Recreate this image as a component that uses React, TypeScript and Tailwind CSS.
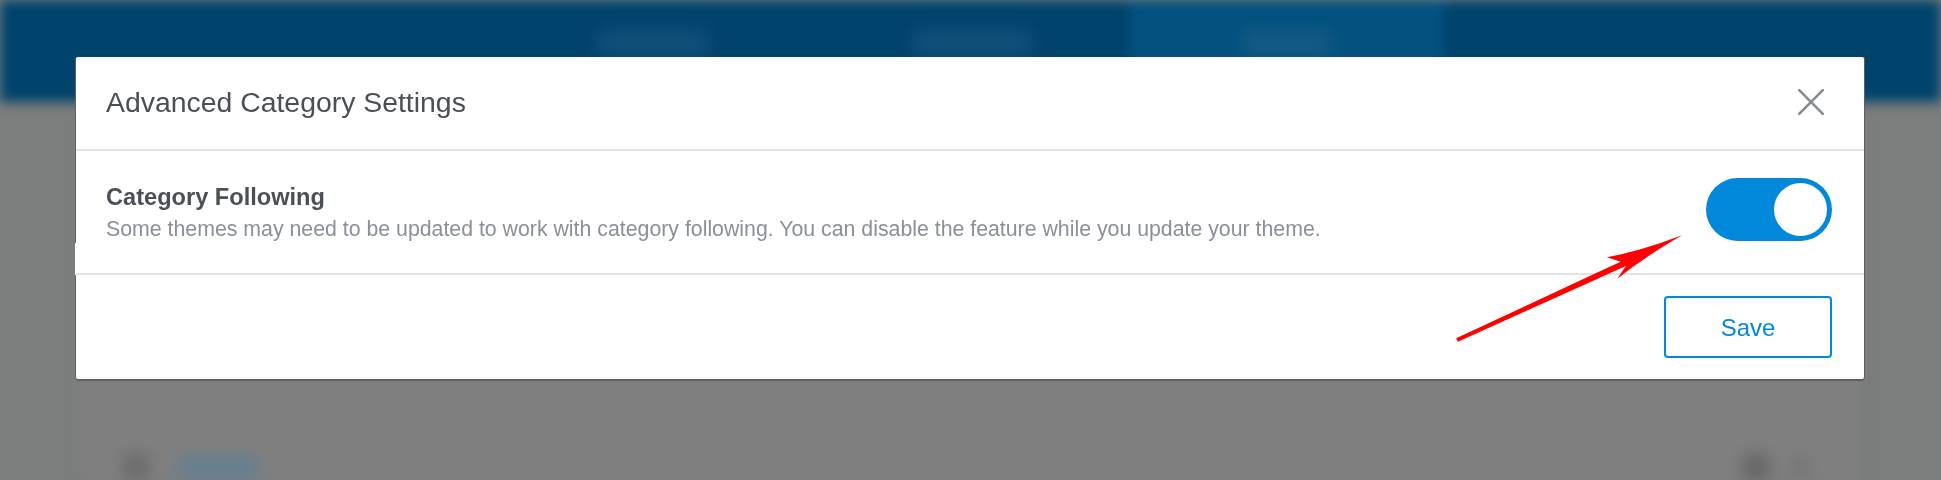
export default function App() {
  return (
    <div className="relative h-[480px] w-[1941px] overflow-hidden bg-[#7c7d7d] font-['Liberation_Sans',Arial,sans-serif]">
      {/* Blurred page behind the dialog */}
      <div className="blur-[6px]">
        <header className="flex h-[102px] bg-[#00436d] pl-[499px]">
          <div className="flex h-full w-[315px] justify-center pr-[8px] pt-[30px]">
            <div className="h-[26px] w-[112px] bg-[#12507a] blur-[7px]" />
          </div>
          <div className="flex h-full w-[315px] justify-center pt-[30px]">
            <div className="h-[26px] w-[120px] bg-[#12507a] blur-[7px]" />
          </div>
          <div className="flex h-full w-[315px] justify-center bg-[#02517f] pt-[30px]">
            <div className="h-[26px] w-[90px] bg-[#175a84] blur-[7px]" />
          </div>
        </header>
        <main className="mx-[80px] h-[378px] bg-[#7f7f7f] pt-[350px]">
          <div className="flex items-center justify-between pl-[42px] pr-[50px]">
            <div className="flex items-center gap-[28px]">
              <div className="size-[28px] rounded-full bg-[#6c6c6c] blur-[4px]" />
              <div className="h-[22px] w-[80px] bg-[#668091] blur-[4px]" />
            </div>
            <div className="flex items-center gap-[20px]">
              <div className="size-[30px] rounded-full bg-[#686868] blur-[4px]" />
              <div className="size-[20px] rounded-full bg-[#767676] blur-[4px]" />
            </div>
          </div>
        </main>
      </div>

      {/* Dialog */}
      <section className="absolute left-[76px] top-[57px] w-[1788px] rounded-[2px] bg-white shadow-[-1px_0_0_#5f5f5f,1px_0_0_#5f5f5f,0_2px_0_#5f5f5f]">
        <div className="flex h-[92px] items-center justify-between pb-[2px] pl-[30px] pr-[40px]">
          <h2 className="text-[28.4px] font-normal leading-none text-[#4a4f55]">Advanced Category Settings</h2>
          <button aria-label="Close" className="block size-[26px]">
            <svg viewBox="0 0 26 26" className="size-[26px]" fill="none" stroke="#888b90" strokeWidth="2.6" strokeLinecap="round">
              <path d="M1.2 1.2 24.8 24.8M24.8 1.2 1.2 24.8" />
            </svg>
          </button>
        </div>
        <div className="flex h-[126px] items-start justify-between border-y-2 border-[#e3e3e3] pl-[30px] pr-[32px]">
          <div className="pt-[28px]">
            <h3 className="text-[23.6px] font-bold leading-[37px] text-[#4b5057]">Category Following</h3>
            <p className="text-[21.3px] leading-[26px] text-[#8a8f98]">
              Some themes may need to be updated to work with category following. You can disable the feature while you update your theme.
            </p>
          </div>
          <div className="mt-[27px] flex h-[63px] w-[126px] items-center justify-end rounded-full bg-[#0288da] pr-[5px]">
            <div className="size-[53px] rounded-full bg-white" />
          </div>
        </div>
        <div className="flex h-[104px] items-center justify-end pr-[32px]">
          <button className="h-[62px] w-[168px] rounded-[4px] border-2 border-[#0288da] pt-[2px] text-[24px] text-[#0288da]">Save</button>
        </div>
        <div className="absolute -left-px top-[186px] h-[32px] w-px bg-white" />
      </section>

      {/* Annotation arrow */}
      <svg className="absolute left-[1450px] top-[230px] h-[115px] w-[240px]" viewBox="1450 230 240 115" fill="#ff0000">
        <path d="M1682.1 235.3Q1641 251 1606.9 257.3L1620.7 261.7 1456.2 338.3 1457.9 341.7 1625.9 266 1617.2 278.7Q1649 254 1682.1 235.3Z" />
      </svg>
    </div>
  );
}
